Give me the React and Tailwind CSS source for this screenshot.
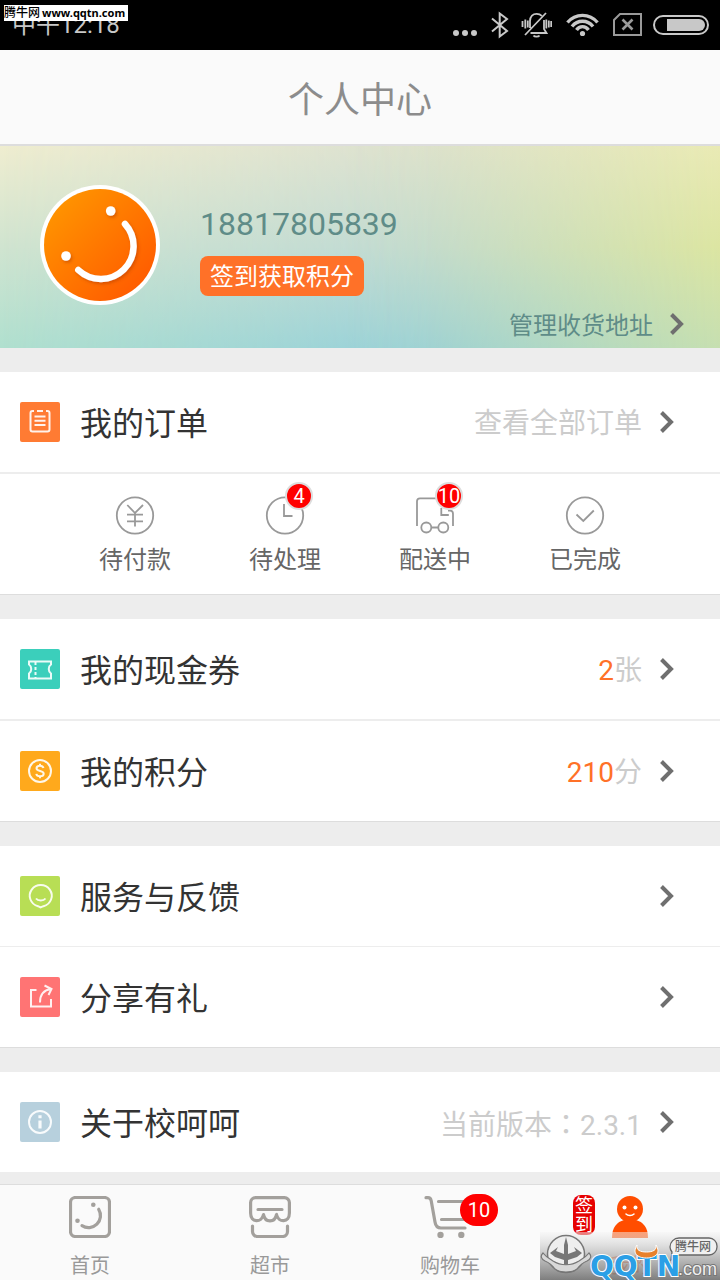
const orderTabs = [
  { label: '待付款', Icon: YenIcon },
  { label: '待处理', Icon: ClockIcon, count: 4 },
  { label: '配送中', Icon: TruckIcon, count: 10 },
  { label: '已完成', Icon: DoneIcon },
]

function StatusBar() {
  return (
    <div className="relative flex h-[50px] items-center justify-between bg-black pl-3 pr-[11px] text-[#c8c8c8]">
      <span className="text-2xl leading-8">中午12:18</span>
      <span className="absolute left-1 top-[5px] flex h-4 w-[124px] items-center gap-0.5 whitespace-nowrap bg-white text-black">
        <span className="text-[12px] font-medium leading-4">腾牛网</span>
        <span className="font-['Noto_Sans'] text-[11px] font-bold leading-4">www.qqtn.com</span>
      </span>
      <div className="flex items-center" aria-hidden="true">
        <svg className="mr-3.5" width="24" height="28" fill="currentColor">
          <circle cx="3" cy="22" r="3" />
          <circle cx="12" cy="22" r="3" />
          <circle cx="21" cy="22" r="3" />
        </svg>
        <svg className="mr-3" width="18" height="28" fill="none" stroke="currentColor" strokeWidth="2">
          <path d="M1 7.5 16 20 8.7 25.5V2.5L16 8 1 20.5" />
        </svg>
        <svg className="mr-3.5" width="31" height="28" fill="none" stroke="currentColor" strokeWidth="1.8">
          <path d="M4 24 25 2M9 17V10C9 5 12 2.8 15.6 2.8c2.4 0 4 .8 5.2 2M23 9v9l2.5 4H9.5M1.5 10v6M4.3 8.5v9M6.8 9.5v7M25.3 8.5v9M27.8 9.5v7M30.2 10v6" />
          <path d="M12.5 24.5c1 1.5 5 1.5 6 0" />
        </svg>
        <svg className="mr-3.5" width="33" height="28" fill="none" stroke="currentColor" strokeWidth="3.4">
          <path d="M1.5 11.5C9.5 2 23.5 2 31.5 11.5M6 15.5c5.5-7 15.5-7 21 0M10.5 19c3-4.5 9-4.5 12 0" />
          <circle cx="16.5" cy="22.5" r="2.6" fill="currentColor" stroke="none" />
        </svg>
        <svg className="mr-[11px]" width="29" height="28" fill="none" stroke="#9a9a9a">
          <path d="M7 3h21v21H1V9z" strokeWidth="2" />
          <path d="m9.5 8.5 10 10m0-10-10 10" strokeWidth="2.6" />
        </svg>
        <svg width="56" height="28" fill="none">
          <rect x="1" y="5" width="54" height="18" rx="9" stroke="currentColor" strokeWidth="2" />
          <path d="M14 8h32a6 6 0 0 1 0 12H14z" fill="currentColor" />
        </svg>
      </div>
    </div>
  )
}

function Chevron() {
  return (
    <svg width="16" height="24" fill="none" stroke="#6f6f6f" strokeWidth="4" className="shrink-0">
      <path d="m2.5 2.5 9.5 9.5-9.5 9.5" />
    </svg>
  )
}

function Avatar() {
  return (
    <svg width="120" height="120" viewBox="0 0 120 120" className="shrink-0">
      <defs>
        <linearGradient id="avatar" x1="0.1" y1="0.1" x2="0.9" y2="0.9">
          <stop offset="0" stopColor="#ff9500" />
          <stop offset="1" stopColor="#ff5a00" />
        </linearGradient>
        <filter id="soft" x="-20%" y="-20%" width="140%" height="140%">
          <feDropShadow dx="1.5" dy="2" stdDeviation="1.5" floodColor="#b33c00" floodOpacity="0.5" />
        </filter>
      </defs>
      <circle cx="60" cy="60" r="60" fill="#fff" />
      <circle cx="60" cy="60" r="56" fill="url(#avatar)" />
      <g filter="url(#soft)">
        <circle cx="70.7" cy="26" r="4.8" fill="#fff" />
        <circle cx="26" cy="71" r="4.8" fill="#fff" />
        <path d="M85 39A32.8 32.8 0 0 1 38.3 85" fill="none" stroke="#fff" strokeWidth="6.5" strokeLinecap="round" />
      </g>
    </svg>
  )
}

function Profile() {
  return (
    <section className="relative isolate flex h-[202px] flex-col justify-between bg-linear-to-b from-[#efedd0] via-[#d0e4d0] to-[#b0e0cf]">
      {/* centre and right tints fade in over the left one */}
      <div className="absolute inset-0 -z-10 bg-linear-to-b from-[#dae0d0] via-[#c0dad4] to-[#98d0da] mask-[linear-gradient(to_right,transparent,black_60%)]" />
      <div className="absolute inset-0 -z-10 bg-linear-to-b from-[#e9eab4] via-[#dce5a2] to-[#c6dfb0] mask-[linear-gradient(to_right,transparent_48%,rgba(0,0,0,0.15)_58%,black)]" />
      <div className="flex items-center gap-10 px-10 pt-[39px]">
        <Avatar />
        <div className="flex flex-col items-start gap-3 pt-2.5">
          <span className="text-[32px] leading-10 text-[#5f8c88]">18817805839</span>
          <button className="h-10 rounded-lg bg-[#ff7128] px-2.5 pt-0.5 text-2xl leading-9 text-white">签到获取积分</button>
        </div>
      </div>
      <a href="#address" className="flex items-center gap-4 self-end pb-1.5 pr-[35px] text-2xl leading-8 text-[#5f8c88]">
        <span className="pt-1">管理收货地址</span>
        <Chevron />
      </a>
    </section>
  )
}

function Row({ icon, color, label, children }) {
  return (
    <a href="#detail" className="block bg-white">
      <span className="flex h-[100px] items-center pl-5 pr-[45px]">
        <span className={`size-10 shrink-0 rounded-xs ${color}`}>
          <svg width="40" height="40" viewBox="0 0 40 40" fill="none" stroke="#fff" strokeOpacity="0.9" strokeWidth="2">
            {icon}
          </svg>
        </span>
        <span className="ml-5 flex-1 pt-1 text-[32px] leading-10 text-[#333]">{label}</span>
        <span className="mr-[17px] pt-1 text-[28px] leading-10 text-[#ccc]">{children}</span>
        <Chevron />
      </span>
    </a>
  )
}

function YenIcon() {
  return (
    <>
      <circle cx="20" cy="20.5" r="18.2" />
      <path d="m12.3 10 7.7 8 8-8M20 18v13.5M12 19.7h16M12 26.3h16" />
    </>
  )
}

function ClockIcon() {
  return (
    <>
      <circle cx="20" cy="20.5" r="18.2" />
      <path d="M19 9v12h8.5" />
    </>
  )
}

function TruckIcon() {
  return (
    <>
      <path d="M2 31V6.3a3 3 0 0 1 3-3h20M26.3 13v7h7.5M33 15.7h2a3 3 0 0 1 3 3V31M16.5 32.5h6.5" />
      <circle cx="11.3" cy="32.5" r="5" />
      <circle cx="28.3" cy="32.5" r="5" />
    </>
  )
}

function DoneIcon() {
  return (
    <>
      <circle cx="20" cy="20.5" r="18.2" />
      <path d="m11.5 19.5 6.8 6.5 10.5-10.5" />
    </>
  )
}

function OrderTab({ label, Icon, count }) {
  return (
    <a href="#orders" className="flex flex-col items-center gap-[9px] pt-[21px] text-2xl leading-8 text-[#666]">
      <span className="relative">
        <svg width="40" height="40" viewBox="0 0 40 40" fill="none" stroke="#999" strokeWidth="1.8">
          <Icon />
        </svg>
        {count && (
          <span className="absolute -top-[13px] left-5 flex size-7 items-center justify-center rounded-full border-2 border-[#ddd] bg-[red] text-xl leading-none text-white">
            {count}
          </span>
        )}
      </span>
      {label}
    </a>
  )
}

function NavItem({ label, icon, width = 42, active, children }) {
  return (
    <a href="#nav" className={`flex flex-col items-center gap-3.5 pt-[11px] text-xl leading-7 ${active ? 'text-[#ff4d00]' : 'text-[#999]'}`}>
      <span className="relative">
        <svg width={width} height="42" fill="none" stroke="#a3a09c" strokeWidth="3.2" strokeLinecap="round">
          {icon}
        </svg>
        {children}
      </span>
      {label}
    </a>
  )
}

function Watermark() {
  return (
    <svg
      className="absolute bottom-0 right-0"
      width="180"
      height="48"
      viewBox="0 0 180 48"
      role="img"
      aria-label="腾牛网 QQTN.com"
    >
      <defs>
        <linearGradient id="fade" x1="0" y1="0" x2="0" y2="1">
          <stop offset="0" stopColor="#f4f4f4" stopOpacity="0.5" />
          <stop offset="0.5" stopColor="#b4b4b4" stopOpacity="0.8" />
          <stop offset="1" stopColor="#707070" stopOpacity="0.9" />
        </linearGradient>
      </defs>
      <rect width="180" height="48" fill="url(#fade)" />
      <circle cx="26" cy="22" r="18.5" fill="#eee" stroke="#777" strokeWidth="1.5" />
      <path d="M26 5l2 8v9l8-3-2-4 8 6-5 4-9 3v8h-4v-8l-9-3-5-4 8-6-2 4 8 3v-9z" fill="#777" />
      <path d="M3 21c-3 3-2 6 2 8 5 2 7 4 10 8 5 4 17 4 22 0 3-4 5-6 10-8 4-2 5-5 2-8-3 4-7 6-10 8-8 5-18 5-26 0-3-2-7-4-10-8z" fill="#d8d8d8" stroke="#777" strokeWidth="1.2" />
      <path d="M139 6h30a8 8 0 0 1 8 8v1a8 8 0 0 1-8 8h-30l-8 5 1-8a8 8 0 0 1-2-5 9 9 0 0 1 9-9z" fill="#f0f0f0" stroke="#666" strokeWidth="1.3" />
      <text x="135" y="19" fontSize="12" fontWeight="500" fill="#666">腾牛网</text>
      <text
        x="50"
        y="44"
        fontSize="28"
        fontWeight="700"
        fill="#2b9fe6"
        stroke="#fff"
        strokeWidth="2"
        paintOrder="stroke"
        className="font-['DejaVu_Sans']"
      >
        QQTN
      </text>
      <path
        d="M97 13c-5 8 0 13 9.5 13S121 21 116 13c1 5-3 7-9.5 7S96 18 97 13z"
        fill="#e8812c"
        stroke="#fff"
        strokeWidth="1"
      />
      <text x="138" y="43" fontSize="18" fill="#eee" stroke="#777" strokeWidth="2" paintOrder="stroke" className="font-['Liberation_Sans']">
        .com
      </text>
    </svg>
  )
}

export default function App() {
  return (
    <div className="flex min-h-screen flex-col bg-[#ededed] font-[Roboto,'Noto_Sans_CJK_SC',sans-serif]">
      <StatusBar />
      <header className="flex h-24 items-center justify-center border-b-2 border-[#ddd] bg-[#fafafa] pt-2">
        <h1 className="text-[36px] leading-[48px] text-[#8c8c8c]">个人中心</h1>
      </header>

      <main className="flex flex-1 flex-col gap-6 pb-3">
        <Profile />

        <section className="border-b border-[#ddd] bg-white">
          <Row
            label="我的订单"
            color="bg-[#ff7b33]"
            icon={<path d="M14 9h-1.500A2 2 0 0 0 10.500 11v16.500a2 2 0 0 0 2 2h15a2 2 0 0 0 2-2V11a2 2 0 0 0-2-2H26M17 9h6M14.500 14.500h11M14.500 18.700h11M14.500 22.900h11" />}
          >
            查看全部订单
          </Row>
          <div className="grid h-[122px] grid-cols-4 border-t-2 border-[#ededed] px-[60px]">
            {orderTabs.map(tab => <OrderTab key={tab.label} {...tab} />)}
          </div>
        </section>

        <section className="divide-y-2 divide-[#ededed] border-b border-b-[#ddd] bg-white">
          <Row
            label="我的现金券"
            color="bg-[#3bcfbb]"
            icon={
              <>
                <path d="M9 12.500h22v3c-3 2-3 7 0 9v5H9v-5c3-2 3-7 0-9z" />
                <path d="M15.500 13v16" strokeDasharray="3 2" />
              </>
            }
          >
            <span className="text-[#ff7128]">2</span>张
          </Row>
          <Row
            label="我的积分"
            color="bg-[#ffa91c]"
            icon={
              <>
                <circle cx="20" cy="20" r="11" />
                <path d="M23.500 17c-.5-1.600-1.800-2.200-3.500-2.200-2 0-3.500.9-3.500 2.500 0 3.600 7.200 1.800 7.200 5.400 0 1.700-1.600 2.600-3.700 2.600-1.900 0-3.400-.8-3.700-2.500M20 12.800v2M20 25v2.200" />
              </>
            }
          >
            <span className="text-[#ff7128]">210</span>分
          </Row>
        </section>

        <section className="divide-y divide-[#ededed] border-b border-b-[#ddd] bg-white">
          <Row
            label="服务与反馈"
            color="bg-[#b8de55]"
            icon={
              <>
                <path d="M18 30.200a11 10.800 0 1 1 5.500 0L20.500 31.500z" />
                <path d="M16 22.500c2 2.500 7.500 2.500 9.500 0" />
              </>
            }
          />
          <Row
            label="分享有礼"
            color="bg-[#ff7474]"
            icon={<path d="M16.500 13H11v16.500h20V22M20 25.500c0-7 3.500-12.500 11-13.500M24.500 8.500 31.500 12l-3 6" />}
          />
        </section>

        <section className="bg-white">
          <Row
            label="关于校呵呵"
            color="bg-[#b7d0dd]"
            icon={
              <>
                <circle cx="20" cy="20" r="11" />
                <path d="M20 13.200v3M20 18.500v8" strokeWidth="3.2" />
              </>
            }
          >
            当前版本<span className="font-['Noto_Sans_CJK_TC']" lang="zh-TW">：</span>2.3.1
          </Row>
        </section>
      </main>

      <nav className="relative grid h-24 grid-cols-4 border-t border-[#ddd] bg-[#fafafa]">
        <NavItem
          label="首页"
          icon={
            <>
              <rect x="1.5" y="1.5" width="39" height="39" rx="5" />
              <path d="M29.700 13.300A12 12 0 0 1 13 29.700" />
              <circle cx="24.3" cy="8.7" r="2.3" fill="#a3a09c" stroke="none" />
              <circle cx="8.5" cy="24.7" r="2.3" fill="#a3a09c" stroke="none" />
            </>
          }
        />
        <NavItem
          label="超市"
          icon={
            <>
              <path d="M1.600 17V6.600a5 5 0 0 1 5-5h28.800a5 5 0 0 1 5 5V17c0 10-11 10-12.900 1.500-1.500 8.500-11.500 8.500-13 0C12.600 27 1.600 27 1.600 17z" strokeLinejoin="round" />
              <path d="M9 13.500h24M3.500 30v5.500a5 5 0 0 0 5 5h25a5 5 0 0 0 5-5V30" />
            </>
          }
        />
        <NavItem
          label="购物车"
          width={52}
          icon={
            <>
              <path d="M2 1.700h2c2 0 2.800 1 3.200 3L11 26c.6 4 2 6 6 6h24M14.500 5.500H46l-4 18H17.500" />
              <circle cx="16.5" cy="39" r="3.2" fill="#a3a09c" stroke="none" />
              <circle cx="37.3" cy="39" r="3.2" fill="#a3a09c" stroke="none" />
            </>
          }
        >
          <span className="absolute -top-0.5 left-9 flex h-8 w-[38px] items-center justify-center rounded-full bg-[red] text-xl leading-none text-white">
            10
          </span>
        </NavItem>
        <NavItem
          label="我的"
          active
          icon={
            <g stroke="none" fill="#ff4d00">
              <circle cx="21" cy="13" r="13" />
              <path d="M3 42c0-11 5-16 12-18h12c7 2 12 7 12 18z" />
              <circle cx="15.5" cy="11.5" r="2" fill="#fff" />
              <circle cx="26.5" cy="11.5" r="2" fill="#fff" />
              <path d="M17 18c2 2 6 2 8 0" fill="none" stroke="#fff" strokeWidth="1.5" />
            </g>
          }
        >
          <span className="absolute -left-9 -top-px flex h-10 w-[22px] flex-col items-center justify-center rounded-lg bg-[#e60000] text-[18px] leading-[19px] text-white">
            <span>签</span>
            <span>到</span>
          </span>
        </NavItem>
        <Watermark />
      </nav>
    </div>
  )
}
